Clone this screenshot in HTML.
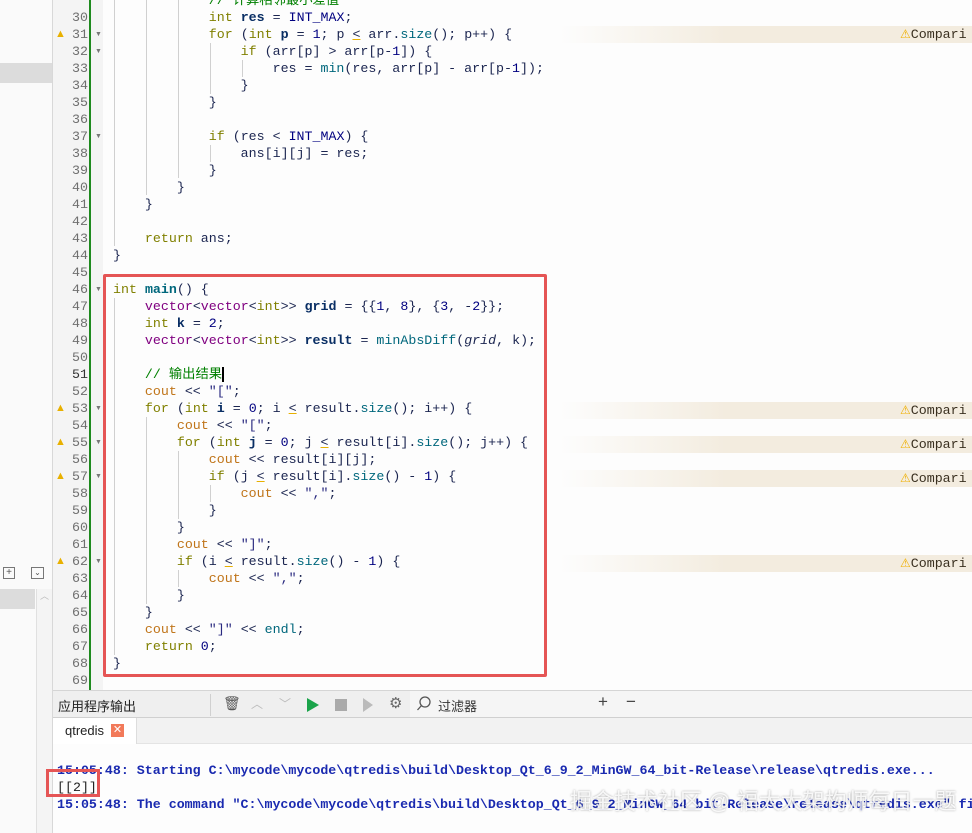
<!DOCTYPE html>
<html><head><meta charset="utf-8"><style>
*{margin:0;padding:0;box-sizing:border-box}
body{width:972px;height:833px;overflow:hidden;background:#fdfdfd;font-family:"Liberation Sans","Noto Sans CJK SC",sans-serif;position:relative}
.left{position:absolute;left:0;top:0;width:53px;height:833px;background:#fafafa;border-right:1px solid #d8d8d8}
.gut{position:absolute;left:53px;top:0;width:50px;height:690px;background:#f4f4f4}
.green{position:absolute;left:89px;top:0;width:2px;height:690px;background:#1f8a1f}
.ln{position:absolute;left:53px;width:35px;text-align:right;font:13.3px "Liberation Mono",monospace;color:#6f6f6f;height:17px;line-height:17px}
.code{position:absolute;left:113px;font:13.3px "Liberation Mono","Noto Sans CJK SC",monospace;white-space:pre;height:17px;line-height:17px;color:#1b2550}
.warn{position:absolute;left:55px;font-size:11px;color:#e8b000;line-height:17px}
.fold{position:absolute;left:95px;font-size:7px;color:#777;line-height:17px}
.stripe{position:absolute;left:560px;width:412px;height:17px;background:linear-gradient(90deg,rgba(244,238,225,0),#f3ecdf 40%)}
.stripe span{position:absolute;left:340px;font:13.3px "Liberation Mono",monospace;color:#3a3020;line-height:17px}
.stripe b{color:#f0b000;font-weight:normal;font-size:12px}
.g{position:absolute;width:1px;background:#d0d0d0}
.k{color:#808000}.t{color:#800080}.v{font-weight:bold;color:#092e64}.n{color:#000080}.f{color:#00677c}.c{color:#c0751a}.s{color:#2a2a80}.cm{color:#008000}
.red{position:absolute;left:103px;top:274px;width:444px;height:403px;border:3px solid #e55555;border-radius:2px}
.hdr{position:absolute;left:53px;top:690px;width:919px;height:28px;background:#efefef;border-top:1px solid #d5d5d5;border-bottom:1px solid #d0d0d0}
.tabs{position:absolute;left:53px;top:718px;width:919px;height:26px;background:#f2f2f2;border-bottom:1px solid #e4e4e4}
.out{position:absolute;left:57px;font:bold 13.3px "Liberation Mono",monospace;color:#1a2ab0;white-space:pre;line-height:17px}
</style></head><body>
<div class="left">
 <div style="position:absolute;left:0;top:63px;width:52px;height:20px;background:#dcdcdc"></div>
 <div style="position:absolute;left:3px;top:567px;width:12px;height:12px;border:1px solid #777;font-size:10px;line-height:9px;text-align:center;color:#555">+</div>
 <div style="position:absolute;left:31px;top:567px;width:13px;height:12px;border:1px solid #777;font-size:8px;line-height:9px;text-align:center;color:#555">⌄</div>
 <div style="position:absolute;left:0;top:589px;width:35px;height:20px;background:#dcdcdc"></div>
 <div style="position:absolute;left:36px;top:589px;width:16px;height:244px;border-left:1px solid #e0e0e0;background:#f4f4f4;font-size:9px;color:#bbb;text-align:center">︿</div>
</div>
<div class="gut"></div>
<div class="green"></div>

<div class="g" style="left:114px;top:0;height:246px"></div>
<div class="g" style="left:146px;top:0;height:195px"></div>
<div class="g" style="left:178px;top:0;height:178px"></div>
<div class="g" style="left:210px;top:43px;height:51px"></div>
<div class="g" style="left:210px;top:145px;height:17px"></div>
<div class="g" style="left:242px;top:60px;height:17px"></div>
<div class="g" style="left:114px;top:298px;height:357px"></div>
<div class="g" style="left:146px;top:417px;height:187px"></div>
<div class="g" style="left:178px;top:451px;height:68px"></div>
<div class="g" style="left:178px;top:570px;height:17px"></div>
<div class="g" style="left:210px;top:485px;height:17px"></div>

<div class="stripe" style="top:26px"><span><b>⚠</b>Compari</span></div>
<div class="stripe" style="top:402px"><span><b>⚠</b>Compari</span></div>
<div class="stripe" style="top:436px"><span><b>⚠</b>Compari</span></div>
<div class="stripe" style="top:470px"><span><b>⚠</b>Compari</span></div>
<div class="stripe" style="top:555px"><span><b>⚠</b>Compari</span></div>

<div class="ln" style="top:9px">30</div><div class="ln" style="top:26px">31</div><div class="ln" style="top:43px">32</div><div class="ln" style="top:60px">33</div><div class="ln" style="top:77px">34</div><div class="ln" style="top:94px">35</div><div class="ln" style="top:111px">36</div><div class="ln" style="top:128px">37</div><div class="ln" style="top:145px">38</div><div class="ln" style="top:162px">39</div><div class="ln" style="top:179px">40</div><div class="ln" style="top:196px">41</div><div class="ln" style="top:213px">42</div><div class="ln" style="top:230px">43</div><div class="ln" style="top:247px">44</div><div class="ln" style="top:264px">45</div><div class="ln" style="top:281px">46</div><div class="ln" style="top:298px">47</div><div class="ln" style="top:315px">48</div><div class="ln" style="top:332px">49</div><div class="ln" style="top:349px">50</div><div class="ln" style="top:366px;color:#333">51</div><div class="ln" style="top:383px">52</div><div class="ln" style="top:400px">53</div><div class="ln" style="top:417px">54</div><div class="ln" style="top:434px">55</div><div class="ln" style="top:451px">56</div><div class="ln" style="top:468px">57</div><div class="ln" style="top:485px">58</div><div class="ln" style="top:502px">59</div><div class="ln" style="top:519px">60</div><div class="ln" style="top:536px">61</div><div class="ln" style="top:553px">62</div><div class="ln" style="top:570px">63</div><div class="ln" style="top:587px">64</div><div class="ln" style="top:604px">65</div><div class="ln" style="top:621px">66</div><div class="ln" style="top:638px">67</div><div class="ln" style="top:655px">68</div><div class="ln" style="top:672px">69</div>

<div class="warn" style="top:26px">▲</div><div class="warn" style="top:400px">▲</div><div class="warn" style="top:434px">▲</div><div class="warn" style="top:468px">▲</div><div class="warn" style="top:553px">▲</div>
<div class="fold" style="top:26px">▼</div><div class="fold" style="top:43px">▼</div><div class="fold" style="top:128px">▼</div><div class="fold" style="top:281px">▼</div><div class="fold" style="top:400px">▼</div><div class="fold" style="top:434px">▼</div><div class="fold" style="top:468px">▼</div><div class="fold" style="top:553px">▼</div>

<div class="code" style="top:-8px">            <span class="cm">// 计算相邻最小差值</span></div>
<div class="code" style="top:9px">            <span class="k">int</span> <span class="v">res</span> = <span class="n">INT_MAX</span>;</div>
<div class="code" style="top:26px">            <span class="k">for</span> (<span class="k">int</span> <span class="v">p</span> = <span class="n">1</span>; p <span style="text-decoration:underline;text-decoration-color:#e8b000">&lt;</span> arr.<span class="f">size</span>(); p++) {</div>
<div class="code" style="top:43px">                <span class="k">if</span> (arr[p] &gt; arr[p-<span class="n">1</span>]) {</div>
<div class="code" style="top:60px">                    res = <span class="f">min</span>(res, arr[p] - arr[p-<span class="n">1</span>]);</div>
<div class="code" style="top:77px">                }</div>
<div class="code" style="top:94px">            }</div>
<div class="code" style="top:128px">            <span class="k">if</span> (res &lt; <span class="n">INT_MAX</span>) {</div>
<div class="code" style="top:145px">                ans[i][j] = res;</div>
<div class="code" style="top:162px">            }</div>
<div class="code" style="top:179px">        }</div>
<div class="code" style="top:196px">    }</div>
<div class="code" style="top:230px">    <span class="k">return</span> ans;</div>
<div class="code" style="top:247px">}</div>
<div class="code" style="top:281px"><span class="k">int</span> <span class="v" style="color:#00677c">main</span>() {</div>
<div class="code" style="top:298px">    <span class="t">vector</span>&lt;<span class="t">vector</span>&lt;<span class="k">int</span>&gt;&gt; <span class="v">grid</span> = {{<span class="n">1</span>, <span class="n">8</span>}, {<span class="n">3</span>, -<span class="n">2</span>}};</div>
<div class="code" style="top:315px">    <span class="k">int</span> <span class="v">k</span> = <span class="n">2</span>;</div>
<div class="code" style="top:332px">    <span class="t">vector</span>&lt;<span class="t">vector</span>&lt;<span class="k">int</span>&gt;&gt; <span class="v">result</span> = <span class="f">minAbsDiff</span>(<i>grid</i>, k);</div>
<div class="code" style="top:366px">    <span class="cm">// 输出结果</span><span style="display:inline-block;width:2px;height:15px;background:#000;vertical-align:middle"></span></div>
<div class="code" style="top:383px">    <span class="c">cout</span> &lt;&lt; <span class="s">"["</span>;</div>
<div class="code" style="top:400px">    <span class="k">for</span> (<span class="k">int</span> <span class="v">i</span> = <span class="n">0</span>; i <u style="text-decoration-color:#e8b000">&lt;</u> result.<span class="f">size</span>(); i++) {</div>
<div class="code" style="top:417px">        <span class="c">cout</span> &lt;&lt; <span class="s">"["</span>;</div>
<div class="code" style="top:434px">        <span class="k">for</span> (<span class="k">int</span> <span class="v">j</span> = <span class="n">0</span>; j <u style="text-decoration-color:#e8b000">&lt;</u> result[i].<span class="f">size</span>(); j++) {</div>
<div class="code" style="top:451px">            <span class="c">cout</span> &lt;&lt; result[i][j];</div>
<div class="code" style="top:468px">            <span class="k">if</span> (j <u style="text-decoration-color:#e8b000">&lt;</u> result[i].<span class="f">size</span>() - <span class="n">1</span>) {</div>
<div class="code" style="top:485px">                <span class="c">cout</span> &lt;&lt; <span class="s">","</span>;</div>
<div class="code" style="top:502px">            }</div>
<div class="code" style="top:519px">        }</div>
<div class="code" style="top:536px">        <span class="c">cout</span> &lt;&lt; <span class="s">"]"</span>;</div>
<div class="code" style="top:553px">        <span class="k">if</span> (i <u style="text-decoration-color:#e8b000">&lt;</u> result.<span class="f">size</span>() - <span class="n">1</span>) {</div>
<div class="code" style="top:570px">            <span class="c">cout</span> &lt;&lt; <span class="s">","</span>;</div>
<div class="code" style="top:587px">        }</div>
<div class="code" style="top:604px">    }</div>
<div class="code" style="top:621px">    <span class="c">cout</span> &lt;&lt; <span class="s">"]"</span> &lt;&lt; <span class="f">endl</span>;</div>
<div class="code" style="top:638px">    <span class="k">return</span> <span class="n">0</span>;</div>
<div class="code" style="top:655px">}</div>

<div class="red"></div>

<div class="hdr">
 <div style="position:absolute;left:5px;top:5px;font-size:13px;color:#222">应用程序输出</div>
 <div style="position:absolute;left:157px;top:3px;width:1px;height:22px;background:#d0d0d0"></div>
 <div style="position:absolute;left:170px;top:4px;font-size:14px;color:#555">🗑</div>
 <div style="position:absolute;left:198px;top:4px;font-size:12px;color:#bbb">︿</div>
 <div style="position:absolute;left:226px;top:4px;font-size:12px;color:#bbb">﹀</div>
 <div style="position:absolute;left:254px;top:7px;width:0;height:0;border-left:12px solid #1aa34a;border-top:7px solid transparent;border-bottom:7px solid transparent"></div>
 <div style="position:absolute;left:282px;top:8px;width:12px;height:12px;background:#aaa"></div>
 <div style="position:absolute;left:310px;top:7px;width:0;height:0;border-left:10px solid #bbb;border-top:7px solid transparent;border-bottom:7px solid transparent"></div>
 <div style="position:absolute;left:336px;top:3px;font-size:15px;color:#666">⚙</div>
 <div style="position:absolute;left:357px;top:0;width:562px;height:26px;background:#f5f5f5"></div>
 <svg style="position:absolute;left:363px;top:5px" width="16" height="16" viewBox="0 0 16 16"><circle cx="9" cy="6" r="5" fill="none" stroke="#555" stroke-width="1.3"/><line x1="5.5" y1="9.5" x2="1.5" y2="14" stroke="#555" stroke-width="1.3"/></svg>
 <div style="position:absolute;left:385px;top:5px;font-size:13px;color:#333">过滤器</div>
 <div style="position:absolute;left:545px;top:1px;font-size:17px;color:#444">+</div>
 <div style="position:absolute;left:573px;top:1px;font-size:17px;color:#444">−</div>
</div>
<div class="tabs">
 <div style="position:absolute;left:0;top:0;width:84px;height:26px;background:#fff;border-right:1px solid #ddd"></div>
 <div style="position:absolute;left:12px;top:5px;font-size:13px;color:#222">qtredis</div>
 <div style="position:absolute;left:58px;top:6px;width:13px;height:13px;background:#f27a5a;color:#fff;font-size:11px;line-height:13px;text-align:center">✕</div>
</div>
<div class="out" style="top:762px">15:05:48: Starting C:\mycode\mycode\qtredis\build\Desktop_Qt_6_9_2_MinGW_64_bit-Release\release\qtredis.exe...</div>
<div class="out" style="top:779px;font-weight:normal;color:#222">[[2]]</div>
<div class="out" style="top:796px">15:05:48: The command "C:\mycode\mycode\qtredis\build\Desktop_Qt_6_9_2_MinGW_64_bit-Release\release\qtredis.exe" fi</div>
<div style="position:absolute;left:46px;top:769px;width:54px;height:28px;border:3px solid #e55555"></div>
<div style="position:absolute;left:570px;top:784px;font-size:22px;color:rgba(255,255,255,0.85);text-shadow:0 0 2px rgba(0,0,0,0.35);white-space:nowrap">掘金技术社区 @ 福大大架构师每日一题</div>
</body></html>
